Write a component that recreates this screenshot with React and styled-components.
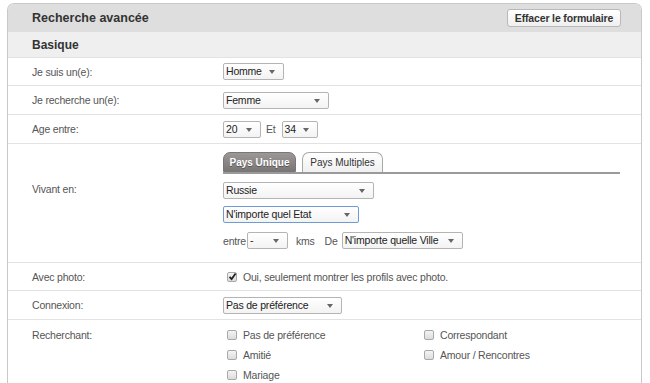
import React from "react";
import styled, { createGlobalStyle } from "styled-components";

const Global = createGlobalStyle`
  html, body { margin: 0; padding: 0; background: #fff; }
  body { font-family: Arial, "Liberation Sans", Helvetica, sans-serif; color: #444; overflow: hidden; }
`;

const Page = styled.div`
  padding: 3px 0 0 7px;
  width: 650px;
  height: 383px;
  box-sizing: border-box;
`;

const Panel = styled.div`
  width: 635px;
  box-sizing: border-box;
  border: 1px solid #c9c9c9;
  border-bottom: none;
  border-radius: 7px 7px 0 0;
  overflow: hidden;
  background: #fff;
`;

const Header = styled.div`
  height: 28px;
  background: #dedede;
  display: flex;
  align-items: center;
  justify-content: space-between;
  padding: 0 20px 0 24px;
`;

const Title = styled.h1`
  margin: 0;
  font-size: 12.5px;
  font-weight: bold;
  color: #333;
`;

const Button = styled.button`
  height: 18px;
  width: 114px;
  padding: 0;
  font-family: inherit;
  font-size: 10.5px;
  letter-spacing: -0.15px;
  font-weight: bold;
  color: #333;
  background: linear-gradient(#ffffff, #efefef);
  border: 1px solid #b9b9b9;
  border-radius: 3px;
  line-height: 16px;
`;

const Section = styled.div`
  height: 25px;
  background: #efefef;
  border-bottom: 1px solid #e2e2e2;
  display: flex;
  align-items: center;
  padding-left: 24px;
  font-size: 12px;
  font-weight: bold;
  color: #333;
`;

const Row = styled.div`
  display: grid;
  grid-template-columns: 191px 1fr;
  align-items: ${(p) => (p.$top ? "start" : "center")};
  min-height: ${(p) => p.$h || 27}px;
  padding: 0 24px;
  border-bottom: 1px solid #e2e2e2;
  box-sizing: border-box;
  font-size: 10.5px;
  letter-spacing: -0.2px;
`;

const Label = styled.div`
  color: #555;
  line-height: 14px;
  padding-top: ${(p) => p.$pt || 0}px;
`;

const Controls = styled.div`
  display: flex;
  align-items: center;
`;

const SelectBox = styled.div`
  position: relative;
  width: ${(p) => p.$w}px;
  height: 17px;
  box-sizing: border-box;
  border: 1px solid ${(p) => (p.$focus ? "#6e9bd3" : "#b4b4b4")};
  border-radius: 2px;
  background: linear-gradient(#ffffff, #f3f3f3);
  font-size: 10.5px;
  letter-spacing: -0.2px;
  line-height: 15px;
  padding-left: 2px;
  color: #222;
  white-space: nowrap;
  flex: none;
`;

const Arrow = styled.span`
  position: absolute;
  right: 8px;
  top: 6px;
  width: 0;
  height: 0;
  border-left: 3.5px solid transparent;
  border-right: 3.5px solid transparent;
  border-top: 4px solid #666;
`;

const Select = ({ w, children, focus }) => (
  <SelectBox $w={w} $focus={focus}>
    {children}
    <Arrow />
  </SelectBox>
);

const Text = styled.span`
  color: #555;
  margin-left: ${(p) => p.$ml || 0}px;
  margin-right: ${(p) => p.$mr || 0}px;
`;

const Stack = styled.div`
  display: flex;
  flex-direction: column;
  padding: 8px 0 13px;
`;

const Tabs = styled.div`
  display: flex;
  gap: 6px;
  width: 397px;
  border-bottom: 2px solid #9a9a9a;
  margin-bottom: 8px;
`;

const Tab = styled.div`
  width: ${(p) => p.$w}px;
  height: 20px;
  box-sizing: border-box;
  border-radius: 7px 7px 0 0;
  font-size: 10px;
  letter-spacing: 0;
  display: flex;
  align-items: center;
  justify-content: center;
  ${(p) =>
    p.$active
      ? `background: linear-gradient(#9c9898, #7a7676); color: #fff; font-weight: bold; border: 1px solid #7a7676; text-shadow: 0 1px 0 #555;`
      : `background: linear-gradient(#ffffff, #f0f0f0); color: #333; border: 1px solid #a8a8a8; border-bottom: none;`}
`;

const Line = styled.div`
  display: flex;
  align-items: center;
  margin-bottom: ${(p) => p.$mb || 0}px;
`;

const Box = styled.span`
  position: relative;
  display: inline-block;
  width: 10px;
  height: 10px;
  box-sizing: border-box;
  border: 1px solid #a9a9a9;
  border-radius: 2px;
  background: linear-gradient(#f4f4f4, #dcdcdc);
  margin: 0 6px 0 4px;
  flex: none;
`;

const Check = styled.svg`
  position: absolute;
  left: 0px;
  top: -1px;
`;

const Checkbox = ({ checked }) => (
  <Box>
    {checked && (
      <Check width="9" height="9" viewBox="0 0 9 9">
        <path d="M1.5 4.8 L3.6 7 L7.6 1.5" fill="none" stroke="#222" strokeWidth="1.8" />
      </Check>
    )}
  </Box>
);

const CheckText = styled.span`
  color: #555;
`;

const CheckGrid = styled.div`
  display: grid;
  grid-template-columns: 197px 1fr;
  row-gap: 4px;
  padding-top: 7px;
  & > div {
    height: 16px;
    display: flex;
    align-items: center;
  }
`;

export default function App() {
  return (
    <>
      <Global />
      <Page>
        <Panel>
          <Header>
            <Title>Recherche avancée</Title>
            <Button>Effacer le formulaire</Button>
          </Header>
          <Section>Basique</Section>
          <Row $h={28}>
            <Label>Je suis un(e):</Label>
            <Controls>
              <Select w={61}>Homme</Select>
            </Controls>
          </Row>
          <Row $h={29}>
            <Label>Je recherche un(e):</Label>
            <Controls>
              <Select w={106}>Femme</Select>
            </Controls>
          </Row>
          <Row $h={29}>
            <Label>Age entre:</Label>
            <Controls>
              <Select w={38}>20</Select>
              <Text $ml={5} $mr={6}>Et</Text>
              <Select w={36}>34</Select>
            </Controls>
          </Row>
          <Row $h={119} $top>
            <Label $pt={38}>Vivant en:</Label>
            <Stack>
              <Tabs>
                <Tab $active $w={73}>Pays Unique</Tab>
                <Tab $w={81}>Pays Multiples</Tab>
              </Tabs>
              <Line $mb={7}>
                <Select w={151}>Russie</Select>
              </Line>
              <Line $mb={9}>
                <Select w={136} focus>N'importe quel Etat</Select>
              </Line>
              <Line>
                <Text $mr={1}>entre</Text>
                <Select w={41}>-</Select>
                <Text $ml={8} $mr={10}>kms</Text>
                <Text $mr={4}>De</Text>
                <Select w={121}>N'importe quelle Ville</Select>
              </Line>
            </Stack>
          </Row>
          <Row $h={28}>
            <Label>Avec photo:</Label>
            <Controls>
              <Checkbox checked />
              <CheckText>Oui, seulement montrer les profils avec photo.</CheckText>
            </Controls>
          </Row>
          <Row $h={29}>
            <Label>Connexion:</Label>
            <Controls>
              <Select w={119}>Pas de préférence</Select>
            </Controls>
          </Row>
          <Row $h={70} $top>
            <Label $pt={8}>Recherchant:</Label>
            <CheckGrid>
              <div><Checkbox /><CheckText>Pas de préférence</CheckText></div>
              <div><Checkbox /><CheckText>Correspondant</CheckText></div>
              <div><Checkbox /><CheckText>Amitié</CheckText></div>
              <div><Checkbox /><CheckText>Amour / Rencontres</CheckText></div>
              <div><Checkbox /><CheckText>Mariage</CheckText></div>
            </CheckGrid>
          </Row>
        </Panel>
      </Page>
    </>
  );
}
